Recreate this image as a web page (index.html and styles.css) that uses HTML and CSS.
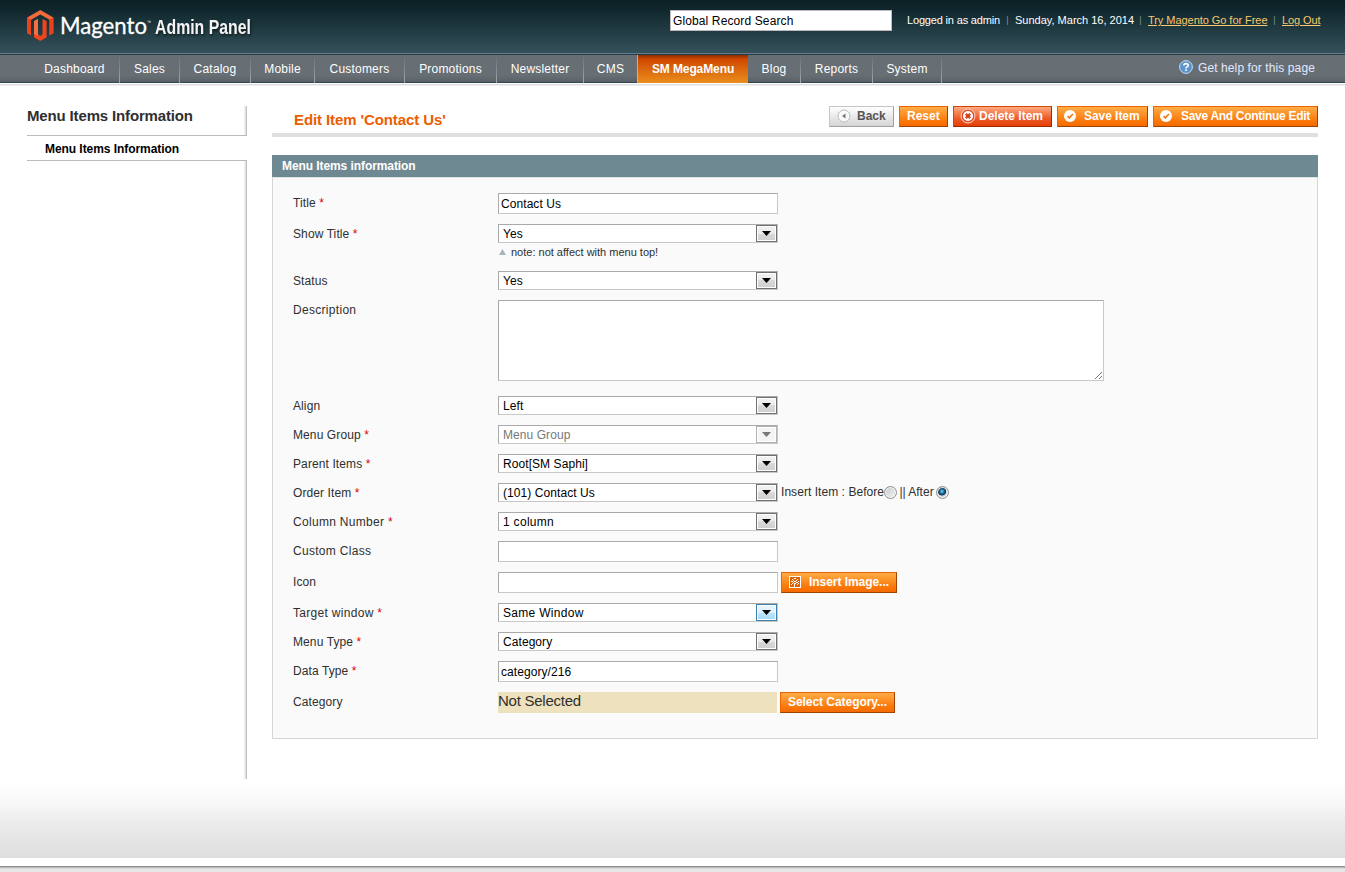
FILE: index.html
```html
<!DOCTYPE html>
<html lang="en">
<head>
    <meta charset="UTF-8">
    <title>Edit Item 'Contact Us' / Magento Admin</title>
    <link rel="stylesheet" href="styles.css">
</head>
<body>

    <div class="header">
        <svg class="logo" width="240" height="44" viewBox="0 0 240 44">
            <path d="M13.3 10 L26.3 17.5 V33 L22.6 35.2 V19.7 L13.3 14.4 L4 19.7 V35.2 L0.3 33 V17.5 Z" fill="#f26b3a"/>
            <path d="M0.3 17.5 L4 19.7 V35.2 L0.3 33 Z M22.6 19.7 L26.3 17.5 V33 L22.6 35.2 Z" fill="#e8431c"/>
            <path d="M7 21 L11 19 V34.5 L13.3 36 L15.5 34.5 V19 L19.6 21 V37.3 L13.3 41 L7 37.3 Z" fill="#f0451c"/>
            <path d="M7 21 L11 19 V36 L7 34 Z" fill="#f46f42"/>
            <text x="33" y="34" class="logo-name" textLength="87" lengthAdjust="spacingAndGlyphs">Magento</text>
            <text x="120" y="24" class="logo-tm" textLength="4" lengthAdjust="spacingAndGlyphs">™</text>
            <text x="128" y="34" class="logo-panel" textLength="96" lengthAdjust="spacingAndGlyphs">Admin Panel</text>
        </svg>
        <div class="header-right">
            <input class="search" type="text" value="Global Record Search">
            <span class="user">Logged in as admin</span>
            <i>|</i>
            <span class="date">Sunday, March 16, 2014</span>
            <i>|</i>
            <a class="try" href="#">Try Magento Go for Free</a>
            <i>|</i>
            <a class="logout" href="#">Log Out</a>
        </div>
    </div>

    <div class="nav-bar">
        <ul class="nav">
            <li>Dashboard</li>
            <li>Sales</li>
            <li>Catalog</li>
            <li>Mobile</li>
            <li>Customers</li>
            <li>Promotions</li>
            <li>Newsletter</li>
            <li class="before-active">CMS</li>
            <li class="active">SM MegaMenu</li>
            <li>Blog</li>
            <li>Reports</li>
            <li>System</li>
        </ul>
        <div class="help">
            <svg width="14" height="14" viewBox="0 0 14 14">
                <circle cx="7" cy="7" r="6.4" fill="#5d93cd" stroke="#c3dcf2"/>
                <path d="M4.8 5.6 Q4.8 3.6 7 3.6 Q9.2 3.6 9.2 5.4 Q9.2 6.6 7.1 7.6 V8.6" fill="none" stroke="#fff" stroke-width="1.6"/>
                <rect x="6.2" y="9.4" width="1.7" height="1.6" fill="#fff"/>
            </svg>
            <span>Get help for this page</span>
        </div>
    </div>

    <div class="middle">
        <div class="side">
            <h3>Menu Items Information</h3>
            <div class="tab">Menu Items Information</div>
            <div class="side-fill"></div>
        </div>

        <div class="main">
            <div class="content-header">
                <h2>Edit Item 'Contact Us'</h2>
                <div class="buttons">
                    <button class="btn back">
                        <svg width="14" height="14" viewBox="0 0 14 14">
                            <circle cx="7" cy="7" r="6" fill="#fafafa" stroke="#bbb"/>
                            <path d="M8.5 4.5 V9.5 L5 7 Z" fill="#777"/>
                        </svg>
                        <span>Back</span>
                    </button>
                    <button class="btn reset"><span>Reset</span></button>
                    <button class="btn delete">
                        <svg width="16" height="16" viewBox="0 0 16 16">
                            <circle cx="8" cy="8" r="7" fill="#e0532d" stroke="#fbd9cc"/>
                            <circle cx="8" cy="8" r="5" fill="#fff"/>
                            <path d="M5.8 5.8 L10.2 10.2 M10.2 5.8 L5.8 10.2" stroke="#d8441c" stroke-width="2.4"/>
                        </svg>
                        <span>Delete Item</span>
                    </button>
                    <button class="btn save">
                        <svg width="12" height="12" viewBox="0 0 12 12">
                            <circle cx="6" cy="6" r="6" fill="#fff"/>
                            <path d="M3.6 6.2 L5.4 8 L8.8 4" fill="none" stroke="#ef7a1c" stroke-width="1.7"/>
                        </svg>
                        <span>Save Item</span>
                    </button>
                    <button class="btn save-continue">
                        <svg width="12" height="12" viewBox="0 0 12 12">
                            <circle cx="6" cy="6" r="6" fill="#fff"/>
                            <path d="M3.6 6.2 L5.4 8 L8.8 4" fill="none" stroke="#ef7a1c" stroke-width="1.7"/>
                        </svg>
                        <span>Save And Continue Edit</span>
                    </button>
                </div>
            </div>

            <div class="fieldset-head">Menu Items information</div>
            <div class="fieldset">
                <div class="row">
                    <label>Title <em>*</em></label>
                    <input class="text" type="text" value="Contact Us">
                </div>
                <div class="row">
                    <label>Show Title <em>*</em></label>
                    <div>
                        <div class="select"><span>Yes</span><b></b></div>
                        <p class="note"><i></i><span>note: not affect with menu top!</span></p>
                    </div>
                </div>
                <div class="row">
                    <label>Status</label>
                    <div class="select"><span>Yes</span><b></b></div>
                </div>
                <div class="row row-area">
                    <label class="wide">Description</label>
                    <div class="area">
                        <textarea></textarea>
                        <svg width="8" height="8" viewBox="0 0 8 8" shape-rendering="crispEdges">
                            <path d="M0.5 7.5 L7.5 0.5 M4.5 7.5 L7.5 4.5" stroke="#777"/>
                        </svg>
                    </div>
                </div>
                <div class="row">
                    <label>Align</label>
                    <div class="select"><span>Left</span><b></b></div>
                </div>
                <div class="row">
                    <label>Menu Group <em>*</em></label>
                    <div class="select disabled"><span>Menu Group</span><b></b></div>
                </div>
                <div class="row">
                    <label>Parent Items <em>*</em></label>
                    <div class="select"><span>Root[SM Saphi]</span><b></b></div>
                </div>
                <div class="row">
                    <label>Order Item <em>*</em></label>
                    <div class="select"><span>(101) Contact Us</span><b></b></div>
                    <div class="insert">
                        <span class="before">Insert Item : Before</span>
                        <span class="radio"></span>
                        <span class="after">|| After</span>
                        <span class="radio checked"></span>
                    </div>
                </div>
                <div class="row">
                    <label class="wide">Column Number <em>*</em></label>
                    <div class="select"><span class="wide">1 column</span><b></b></div>
                </div>
                <div class="row">
                    <label class="wide">Custom Class</label>
                    <input class="text" type="text">
                </div>
                <div class="row">
                    <label>Icon</label>
                    <input class="text" type="text">
                    <button class="btn insert-image">
                        <svg width="12" height="12" viewBox="0 0 12 12" shape-rendering="crispEdges">
                            <rect x="0.5" y="0.5" width="11" height="11" fill="#dd6204" stroke="#fff"/>
                            <path d="M5 2h2v1h-2z M3 3h1v1h-1z M8 3h1v1h-1z M4 4h1v1h-1z M7 4h1v1h-1z M2 5h2v1h-2z M5 5h2v1h-2z M9 5h1v1h-1z M4 6h1v1h-1z M7 6h2v1h-2z M3 7h1v1h-1z M5 7h2v1h-2z M9 7h1v1h-1z M2 8h1v1h-1z M5 8h1v3h-1z M8 8h1v1h-1z" fill="#fff"/>
                        </svg>
                        <span>Insert Image...</span>
                    </button>
                </div>
                <div class="row">
                    <label class="wide">Target window <em>*</em></label>
                    <div class="select hover"><span class="wide">Same Window</span><b></b></div>
                </div>
                <div class="row">
                    <label>Menu Type <em>*</em></label>
                    <div class="select"><span>Category</span><b></b></div>
                </div>
                <div class="row">
                    <label>Data Type <em>*</em></label>
                    <input class="text" type="text" value="category/216">
                </div>
                <div class="row">
                    <label>Category</label>
                    <div class="not-selected"><span>Not Selected</span></div>
                    <button class="btn select-category"><span>Select Category...</span></button>
                </div>
            </div>
        </div>
    </div>

    <div class="fade"></div>
    <div class="footer"></div>

</body>
</html>
```
FILE: styles.css
```css
* {
    box-sizing: border-box;
}

body {
    margin: 0;
    height: 872px;
    overflow: hidden;
    display: flex;
    flex-direction: column;
    background: #fff;
    color: #2f2f2f;
    font: 12px "Liberation Sans", Arial, sans-serif;
}

h2, h3, p, ul {
    margin: 0;
    padding: 0;
}

/* header */
.header {
    height: 55px;
    flex: none;
    display: flex;
    justify-content: space-between;
    padding-left: 27px;
    background: linear-gradient(#0a2024, #0c2328 10%, #36525c);
    border-bottom: 1px solid #263d49;
    box-shadow: inset 0 -1px 0 #637e88;
}

.logo {
    overflow: visible;
}

.logo-name {
    font: 24px Lato, sans-serif;
    fill: #fff;
    stroke: #fff;
    stroke-width: 0.3px;
}

.logo-tm {
    font: 5px "Liberation Sans", sans-serif;
    fill: #fff;
}

.logo-panel {
    font: bold 20px "Liberation Sans", Arial, sans-serif;
    fill: #f4f4f4;
    filter: drop-shadow(1px 2px 1px rgba(0,0,0,0.5));
}

.header-right {
    display: flex;
    width: 675px;
    padding-top: 10px;
    color: #fff;
    font-size: 11px;
    line-height: 21px;
    white-space: nowrap;
}

.header-right i {
    width: 15px;
    text-align: center;
    font-style: normal;
    font-size: 9px;
    color: #7f979e;
}

.header-right a {
    color: #f8c66f;
}

.search {
    width: 222px;
    height: 21px;
    margin-right: 15px;
    padding: 0 2px;
    border: 1px solid #bdb8bd;
    background: #fff;
    font: 12px "Liberation Sans", Arial, sans-serif;
    letter-spacing: 0.12px;
    color: #000;
}

.user {
    width: 93px;
    letter-spacing: -0.17px;
}

.date { width: 118px; }

.try {
    width: 119px;
    letter-spacing: -0.05px;
}

.logout {
    letter-spacing: -0.1px;
}

/* navigation */
.nav-bar {
    height: 28px;
    flex: none;
    display: flex;
    justify-content: space-between;
    padding-left: 30px;
    background: linear-gradient(#676e74, #676e74 75%, #5a6166);
    border-bottom: 1px solid #2f4553;
    color: #fff;
}

.nav {
    display: grid;
    grid-template-columns: 90px 60px 71px 64px 90px 92px 87px 54px 110px 53px 72px 69px;
    list-style: none;
}

.nav li {
    line-height: 28px;
    text-align: center;
    letter-spacing: 0.2px;
    border-right: 1px solid;
    border-image: linear-gradient(#676e74, #a4a8ab) 1;
}

.nav li.before-active {
    border-image: none;
    border-color: #b0b5b8;
}

.nav li.active {
    font-weight: bold;
    letter-spacing: -0.1px;
    border: 0;
    background: linear-gradient(#8a2e00, #cf4700 15%, #d9620c 45%, #ea8d1c);
}

.help {
    display: flex;
    gap: 5px;
    width: 166px;
    padding-top: 5px;
    line-height: 16px;
    letter-spacing: 0.1px;
    color: #e2e9ff;
}

/* page body */
.middle {
    height: 696px;
    flex: none;
    display: flex;
    gap: 25px;
    padding: 23px 27px 0;
    background: linear-gradient(#fff 1px, #dedede 1px, #dedede 2px, #f0f0f0 2px, #f0f0f0 3px, #fff 3px);
}

.side {
    width: 220px;
    display: flex;
    flex-direction: column;
}

.side h3 {
    height: 30px;
    border-bottom: 1px solid #bbb;
    background: linear-gradient(90deg, #f0f0f0 1px, #e2e2e2 1px, #e2e2e2 2px, #c4c4c4 2px) right / 3px 100% no-repeat;
    font-size: 15px;
    line-height: 20px;
    letter-spacing: -0.15px;
}

.tab {
    height: 25px;
    padding-left: 18px;
    border-bottom: 1px solid #bbb;
    font-weight: bold;
    line-height: 26px;
    letter-spacing: -0.06px;
    color: #000;
}

.side-fill {
    flex: 1;
    background: linear-gradient(90deg, #f0f0f0 1px, #e2e2e2 1px, #e2e2e2 2px, #c4c4c4 2px) right / 3px 100% no-repeat;
}

.main {
    width: 1046px;
}

.content-header {
    display: flex;
    justify-content: space-between;
    height: 31px;
    margin-bottom: 18px;
    padding-left: 22px;
    border-bottom: 4px solid #dfdfdf;
}

.content-header h2 {
    font-size: 15px;
    line-height: 27px;
    letter-spacing: -0.1px;
    color: #eb5e00;
}

.buttons {
    display: flex;
    gap: 5px;
}

.btn {
    display: flex;
    align-items: center;
    height: 21px;
    padding: 0 0 1px 7px;
    border: 1px solid;
    border-color: #ed6502 #a04300 #a04300 #ed6502;
    background: linear-gradient(#ffac47, #f97607 75%, #f66b00);
    color: #fff;
    font: bold 12px "Liberation Sans", Arial, sans-serif;
    white-space: nowrap;
}

.btn.back {
    width: 65px;
    gap: 6px;
    border-color: #c5c5c5 #a0a0a0 #a0a0a0 #c5c5c5;
    background: linear-gradient(#fff, #d5d5d5);
    color: #555;
}

.btn.reset { width: 49px; }

.btn.delete {
    width: 99px;
    padding-left: 6px;
    gap: 3px;
    border-color: #d04807 #a02a00 #a02a00 #d04807;
    background: linear-gradient(#ffaa80, #ed5a28 60%, #e43e05);
}

.btn.save {
    width: 91px;
    gap: 8px;
    padding-left: 6px;
    letter-spacing: -0.05px;
}

.btn.save-continue {
    width: 165px;
    gap: 9px;
    padding-left: 6px;
    letter-spacing: -0.3px;
}

.btn.insert-image {
    width: 116px;
    gap: 8px;
    margin-left: 3px;
    letter-spacing: -0.05px;
}

.btn.select-category {
    width: 115px;
    margin-left: 3px;
    letter-spacing: -0.05px;
}

/* form */
.fieldset-head {
    height: 23px;
    padding-left: 10px;
    border-bottom: 1px solid #dde3e5;
    background: #6f8992;
    color: #fff;
    font-weight: bold;
    line-height: 22px;
    letter-spacing: -0.08px;
}

.fieldset {
    display: flex;
    flex-direction: column;
    gap: 10px;
    height: 561px;
    padding: 15px 0 0 20px;
    border: 1px solid #d6d6d6;
    border-top: 0;
    background: #fafafa;
}

.row {
    display: flex;
}

.row label {
    width: 205px;
    height: 19px;
    line-height: 20px;
    letter-spacing: 0.1px;
}

.row .wide {
    letter-spacing: 0.3px;
}

.row em {
    font-style: normal;
    color: #d40707;
}

.row-area {
    height: 86px;
}

.text,
.select,
.area textarea {
    border: 1px solid;
    border-color: #aaa #c8c8c8 #c8c8c8 #aaa;
    background: #fff;
    color: #000;
    font: 12px "Liberation Sans", Arial, sans-serif;
    letter-spacing: 0.07px;
}

.text {
    width: 280px;
    height: 21px;
    padding: 0 2px;
}

.select {
    display: flex;
    justify-content: space-between;
    width: 280px;
    height: 19px;
    padding-left: 4px;
    line-height: 18px;
}

.select b {
    width: 21px;
    height: 17px;
    padding: 5px 0 0 5px;
    border: 1px solid #707070;
    box-shadow: inset 0 0 0 1px #fff;
    background: linear-gradient(#f2f2f2, #ebebeb 50%, #dadada 50%, #cfcfcf);
}

.select b::after {
    content: "";
    display: block;
    width: 9px;
    height: 5px;
    background: #000;
    clip-path: polygon(0 0, 100% 0, 50% 100%);
}

.select.disabled {
    color: #777;
}

.select.disabled b {
    border-color: #adb2b5;
    background: #f4f4f4;
}

.select.disabled b::after {
    background: #777;
}

.select.hover b {
    border-color: #3c7fb1;
    background: linear-gradient(#eaf6fd, #dcf0fb 50%, #bee6fd 50%, #a7d9f5);
}

.note {
    display: flex;
    height: 18px;
    font-size: 11px;
    line-height: 18px;
}

.note i {
    width: 7px;
    height: 6px;
    margin: 6px 5px 0 1px;
    background: #a5b6bb;
    clip-path: polygon(50% 0, 100% 100%, 0 100%);
}

.area {
    position: relative;
    height: 81px;
}

.area textarea {
    display: block;
    width: 606px;
    height: 81px;
    resize: none;
}

.area svg {
    position: absolute;
    right: 2px;
    bottom: 1px;
}

.insert {
    display: flex;
    padding-left: 3px;
    line-height: 18px;
    white-space: nowrap;
}

.insert .before {
    width: 103px;
    letter-spacing: 0.05px;
}

.insert .after {
    width: 39px;
    text-align: center;
}

.radio {
    width: 13px;
    height: 13px;
    margin-top: 3px;
    border: 1px solid #8e8f8f;
    border-radius: 50%;
    box-shadow: inset 0 0 0 1px #f4f4f4;
    background: linear-gradient(135deg, #c4c8cc, #f4f4f4);
}

.radio.checked {
    background: radial-gradient(circle at 45% 40%, #7fd0f5 0, #1b6b9a 25%, #0d2f4d 42%, #d4d8da 50%);
}

.not-selected {
    width: 279px;
    height: 21px;
    background: #eee2be;
    font-size: 15px;
    line-height: 18px;
    letter-spacing: -0.25px;
}

/* bottom of the page */
.fade {
    height: 79px;
    flex: none;
    background: linear-gradient(#fff, #fafafa 25%, #ececec 55%, #dedede);
}

.footer {
    flex: 1;
    margin-top: 8px;
    border-top: 1px solid #909090;
    background: linear-gradient(#bbb 1px, #d8d8d8 1px, #d8d8d8 2px, #e7e7e7 2px);
}
```
